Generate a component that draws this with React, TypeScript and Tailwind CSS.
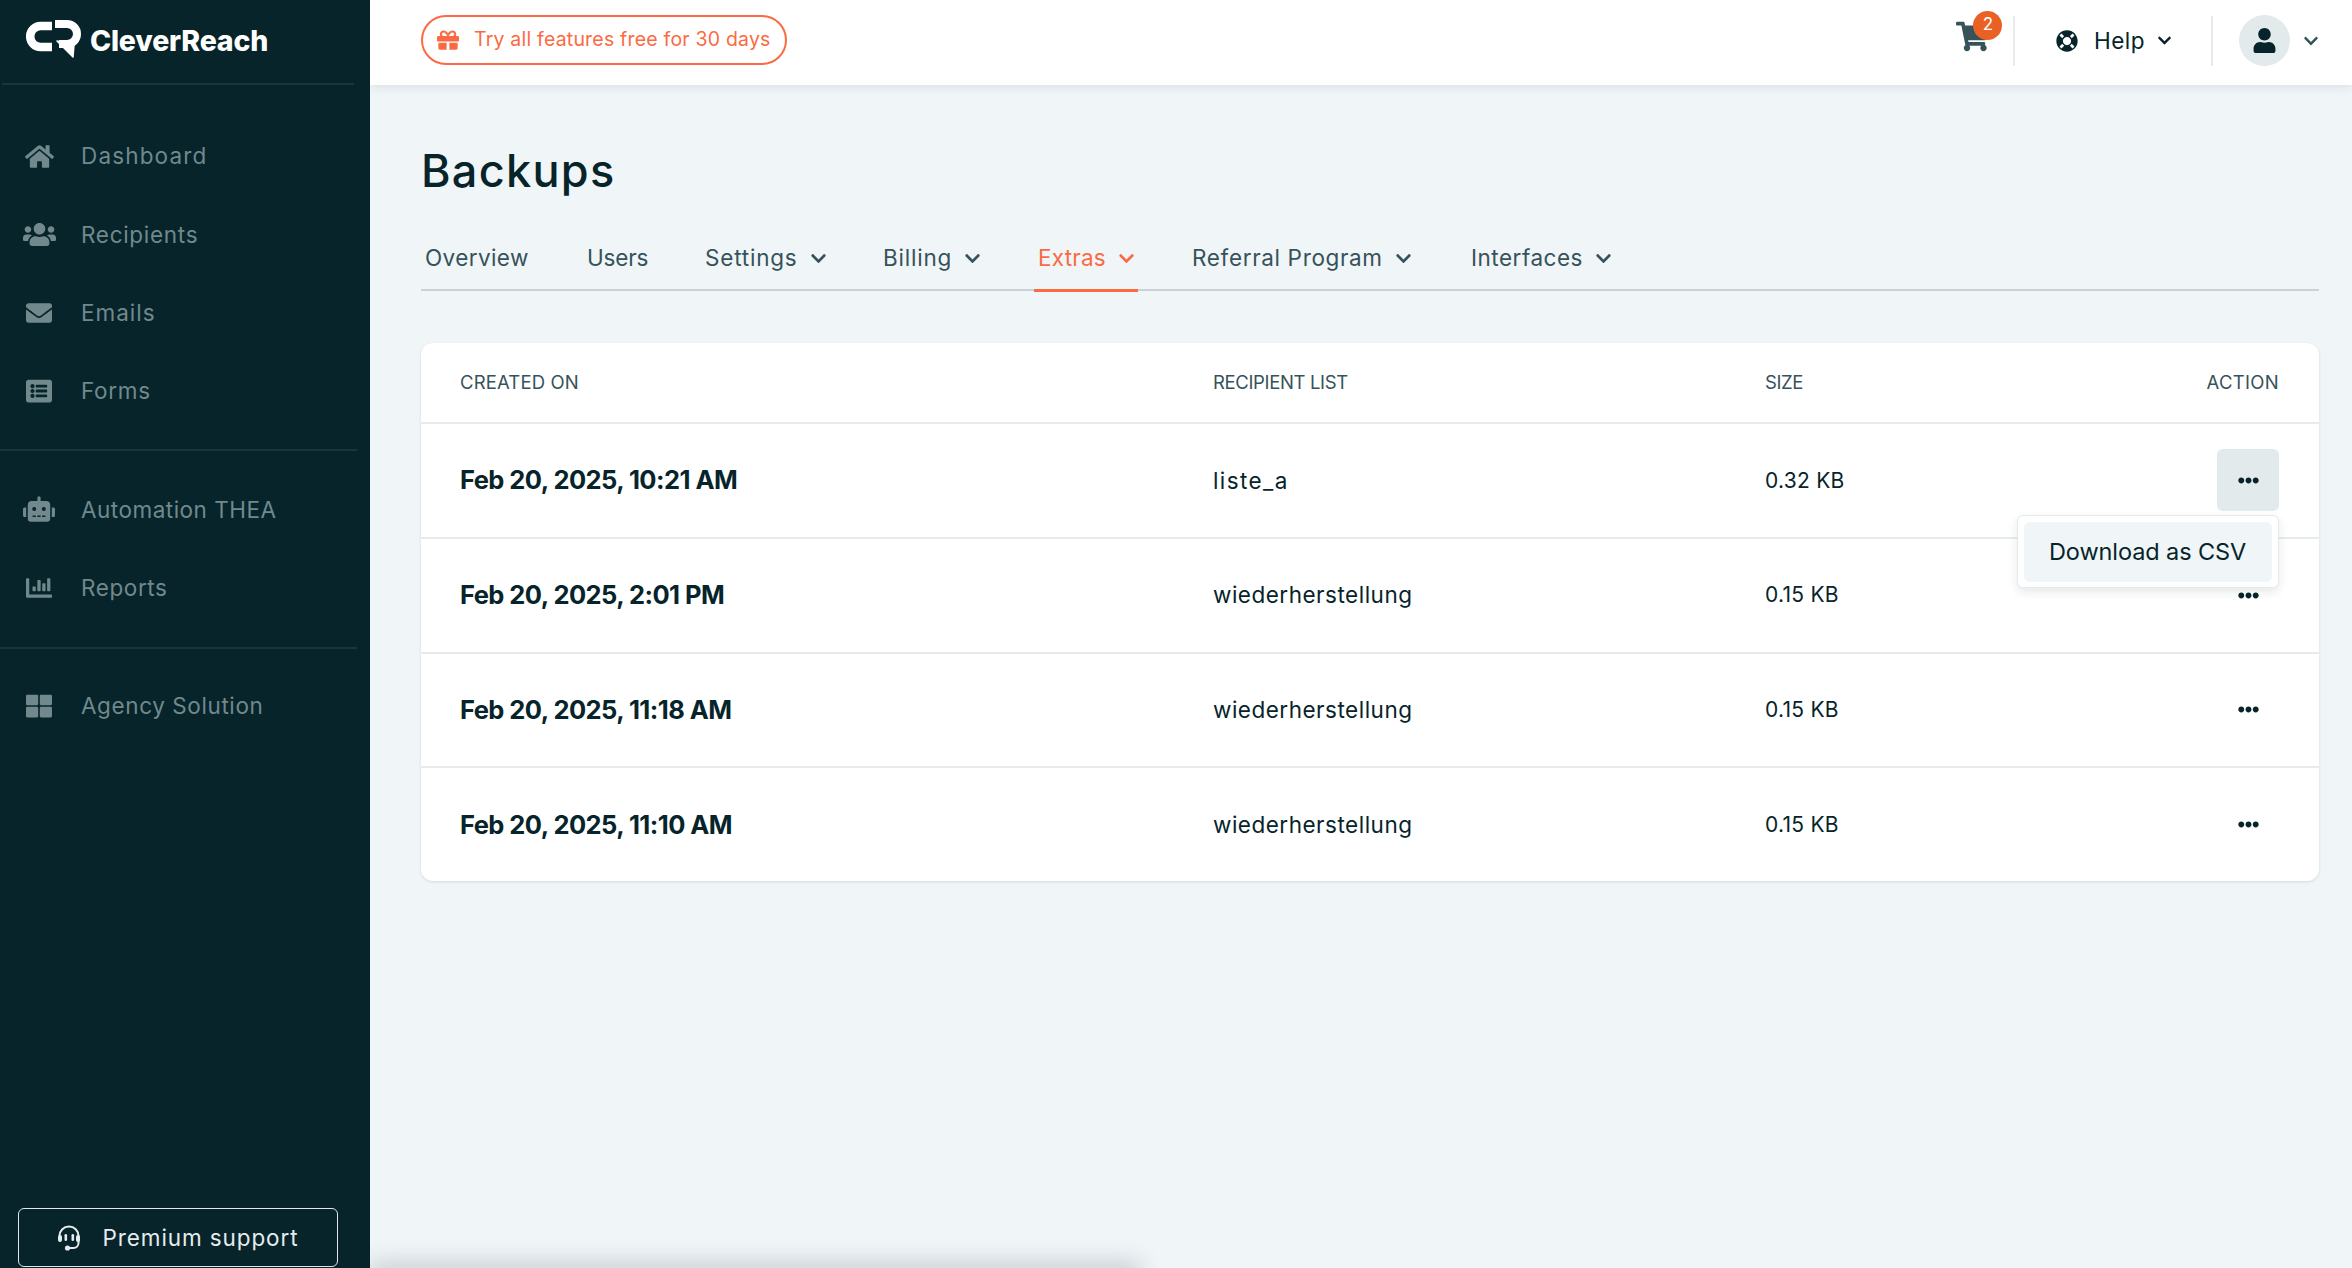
import React from "react";
import { FaHome, FaUsers, FaEnvelope, FaListAlt, FaRobot, FaChartBar, FaThLarge, FaGift, FaShoppingCart, FaLifeRing, FaUser, FaChevronDown, FaEllipsisH } from "react-icons/fa";

const font = { fontFamily: "Inter, sans-serif" };

function Logo() {
  return (
    <div className="flex items-center h-[85px] mx-[2px] w-[352px] border-b-2 border-[#1a363c] pl-[24px] pb-[1px]">
      <svg width="56" height="38" viewBox="0 0 56 38" className="shrink-0 mb-[4px]" fill="none" stroke="#fff">
        <path d="M26 6 H14.7 A10.5 10.5 0 0 0 14.7 27 H26" strokeWidth="8.5" />
        <path d="M29 4 H41 A10 10 0 0 1 41 24 H33" strokeWidth="8" />
        <path d="M31 21 L47 37 L48 25 Z" fill="#fff" stroke="#fff" strokeWidth="1.5" strokeLinejoin="round" />
      </svg>
      <span className="ml-[8px] text-[28.5px] font-extrabold text-white tracking-[-0.2px] leading-none">CleverReach</span>
    </div>
  );
}

function NavItem({ icon, label, tracking, size }: { icon: React.ReactNode; label: string; tracking: string; size: string }) {
  return (
    <div className="flex items-center h-[78.33px] text-[#71898d]">
      <div className={"w-[81px] flex justify-center pr-[3px] shrink-0 " + size}>{icon}</div>
      <span className={"text-[22.5px] " + tracking}>{label}</span>
    </div>
  );
}

function Sidebar() {
  return (
    <aside className="w-[370px] shrink-0 bg-[#06242a] flex flex-col">
      <Logo />
      <nav className="pt-[32px]">
        <NavItem icon={<FaHome />} size="text-[29px]" label="Dashboard" tracking="tracking-[1.15px]" />
        <NavItem icon={<FaUsers />} size="text-[33px]" label="Recipients" tracking="tracking-[0.7px]" />
        <NavItem icon={<FaEnvelope />} size="text-[26px]" label="Emails" tracking="tracking-[1px]" />
        <NavItem icon={<FaListAlt />} size="text-[26px]" label="Forms" tracking="tracking-[0.7px]" />
      </nav>
      <div className="h-[2px] w-[357px] bg-[#1a363c] mt-[19px] mb-[19px]" />
      <div>
        <NavItem icon={<FaRobot />} size="text-[32px]" label="Automation THEA" tracking="tracking-[0.5px]" />
        <NavItem icon={<FaChartBar />} size="text-[26px]" label="Reports" tracking="tracking-[0.6px]" />
      </div>
      <div className="h-[2px] w-[357px] bg-[#1a363c] mt-[20px] mb-[18px]" />
      <NavItem icon={<FaThLarge />} size="text-[26px]" label="Agency Solution" tracking="tracking-[0.6px]" />
      <div className="mt-auto mb-[1px] ml-[18px] w-[320px] h-[59px] border border-[#dfe7e8] rounded-[6px] flex items-center text-[#e6eced]">
        <svg width="24" height="26" viewBox="0 0 24 26" className="ml-[38px] shrink-0" fill="none" stroke="currentColor" strokeWidth="2">
          <path d="M2.5 11 A9.5 9.5 0 0 1 21.5 11 V18 A5 5 0 0 1 16.5 23 H11" />
          <circle cx="10.5" cy="23" r="1.6" fill="currentColor" />
          <rect x="1" y="10" width="4" height="7" rx="2" fill="currentColor" stroke="none" />
          <rect x="19" y="10" width="4" height="7" rx="2" fill="currentColor" stroke="none" />
          <rect x="7.5" y="9" width="2.6" height="7" rx="1.3" fill="currentColor" stroke="none" />
          <rect x="14.5" y="9" width="2.6" height="7" rx="1.3" fill="currentColor" stroke="none" />
        </svg>
        <span className="ml-[21.5px] text-[22.5px] tracking-[0.9px]">Premium support</span>
      </div>
    </aside>
  );
}

function Header() {
  return (
    <header className="h-[85px] shrink-0 bg-white shadow-[0_2px_10px_rgba(6,36,42,0.1)] flex items-center pl-[51px] pr-[33px] pb-[4px] relative z-10">
      <div className="h-[50px] w-[366px] border-2 border-[#fb6a42] rounded-full flex items-center text-[#fb6a42] pl-[14px] whitespace-nowrap mb-[1px]">
        <FaGift className="text-[22px] shrink-0" />
        <span className="ml-[15px] text-[19.5px] tracking-[0.2px]">Try all features free for 30 days</span>
      </div>
      <div className="ml-auto relative w-[33px] h-[33px] text-[#36525a] text-[33px] mb-[9px]">
        <FaShoppingCart />
        <span className="absolute left-[17.5px] top-[-9px] w-[29px] h-[29px] rounded-full bg-[#e96125] text-white text-[17px] flex items-center justify-center">2</span>
      </div>
      <div className="w-[2px] h-[50px] bg-[#e6ecee] ml-[24px]" />
      <FaLifeRing className="ml-[41px] text-[22px] text-[#06242a]" />
      <span className="ml-[16px] text-[22.5px] text-[#06242a] tracking-[0.5px]">Help</span>
      <FaChevronDown className="ml-[12px] text-[15px] text-[#06242a]" />
      <div className="w-[2px] h-[50px] bg-[#e6ecee] ml-[39px]" />
      <div className="ml-[26px] w-[51px] h-[51px] rounded-full bg-[#e3eaec] flex items-center justify-center text-[#06242a] text-[25px]">
        <FaUser />
      </div>
      <FaChevronDown className="ml-[13px] text-[16px] text-[#36525a]" />
    </header>
  );
}

const tabs = [
  { label: "Overview", w: "w-[162px]", track: "tracking-[0.4px]" },
  { label: "Users", w: "w-[118px]", track: "tracking-[-0.2px]" },
  { label: "Settings", w: "w-[178px]", track: "tracking-[0.8px]", chevron: true },
  { label: "Billing", w: "w-[155px]", track: "tracking-[0.8px]", chevron: true },
  { label: "Extras", w: "w-[154px]", track: "tracking-[0.2px]", chevron: true, active: true },
  { label: "Referral Program", w: "w-[279px]", track: "tracking-[0.65px]", chevron: true },
  { label: "Interfaces", w: "w-[170px]", track: "tracking-[0.5px]", chevron: true },
];

function Tabs() {
  return (
    <div className="flex h-[66px] border-b-2 border-[#c7d3d6] mt-[24px] pl-[4px]">
      {tabs.map((t) => (
        <div key={t.label} className={t.w + " shrink-0 flex"}>
          <div className={"h-[66px] flex items-center text-[22.5px] relative " + t.track + " " + (t.active ? "text-[#fb6a42]" : "text-[#36525a]")}>
            <span>{t.label}</span>
            {t.chevron && <FaChevronDown className="ml-[12px] text-[17px]" />}
            {t.active && <span className="absolute left-[-4px] right-[-3px] bottom-[-1px] h-[3px] bg-[#fb6a42]" />}
          </div>
        </div>
      ))}
    </div>
  );
}

const rows = [
  { date: "Feb 20, 2025, 10:21 AM", list: "liste_a", listTrack: "tracking-[1.4px]", size: "0.32 KB" },
  { date: "Feb 20, 2025, 2:01 PM", list: "wiederherstellung", listTrack: "tracking-[0.5px]", size: "0.15 KB" },
  { date: "Feb 20, 2025, 11:18 AM", list: "wiederherstellung", listTrack: "tracking-[0.5px]", size: "0.15 KB" },
  { date: "Feb 20, 2025, 11:10 AM", list: "wiederherstellung", listTrack: "tracking-[0.5px]", size: "0.15 KB" },
];

const gridCols = "grid grid-cols-[753px_552px_1fr_100px] items-center pl-[39px] pr-[40px]";

function Table() {
  return (
    <div className="mt-[52px] bg-white rounded-[12px] shadow-[0_1px_3px_rgba(6,36,42,0.12)] relative">
      <div className={gridCols + " h-[79px] text-[18.5px] text-[#36525a]"}>
        <div className="tracking-[0.15px]">CREATED ON</div>
        <div className="tracking-[-0.35px]">RECIPIENT LIST</div>
        <div className="tracking-[-0.4px]">SIZE</div>
        <div className="text-right tracking-[0.3px]">ACTION</div>
      </div>
      {rows.map((r, i) => (
        <div key={i} className={gridCols + " h-[114.75px] border-t-2 border-[#e6ecee]"}>
          <div className="text-[25.5px] font-bold text-[#06242a] tracking-[-0.55px]">{r.date}</div>
          <div className={"text-[22.5px] text-[#06242a] " + r.listTrack}>{r.list}</div>
          <div className="text-[21px] text-[#06242a] tracking-[0.25px]">{r.size}</div>
          <div className="flex justify-end">
            <div className={"w-[62px] h-[62px] rounded-[6px] flex items-center justify-center text-[#06242a] text-[21px] " + (i === 0 ? "bg-[#e3eaec]" : "")}>
              <FaEllipsisH />
            </div>
          </div>
        </div>
      ))}
      <div className="absolute left-[1596px] top-[172px] w-[262px] h-[73px] bg-white border border-[#e3eaec] rounded-[6px] shadow-[0_4px_10px_rgba(6,36,42,0.1)] p-[6px] z-20">
        <div className="h-[60px] rounded-[6px] bg-[#f0f5f8] flex items-center pl-[25px] text-[23.5px] text-[#06242a] tracking-[-0.1px] whitespace-nowrap">Download as CSV</div>
      </div>
    </div>
  );
}

export default function App() {
  return (
    <div style={font} className="w-[2352px] h-[1268px] flex overflow-hidden bg-[#f0f5f8]">
      <Sidebar />
      <main className="flex-1 flex flex-col relative overflow-hidden">
        <Header />
        <div className="pl-[51px] pr-[33px]">
          <h1 className="text-[45px] font-medium leading-[60px] mt-[56px] text-[#06242a] tracking-[1.3px]">Backups</h1>
          <Tabs />
          <Table />
        </div>
        <div className="absolute left-0 w-[770px] h-[20px] top-[1268px] shadow-[0_-4px_24px_rgba(6,36,42,0.22)]" />
      </main>
    </div>
  );
}
